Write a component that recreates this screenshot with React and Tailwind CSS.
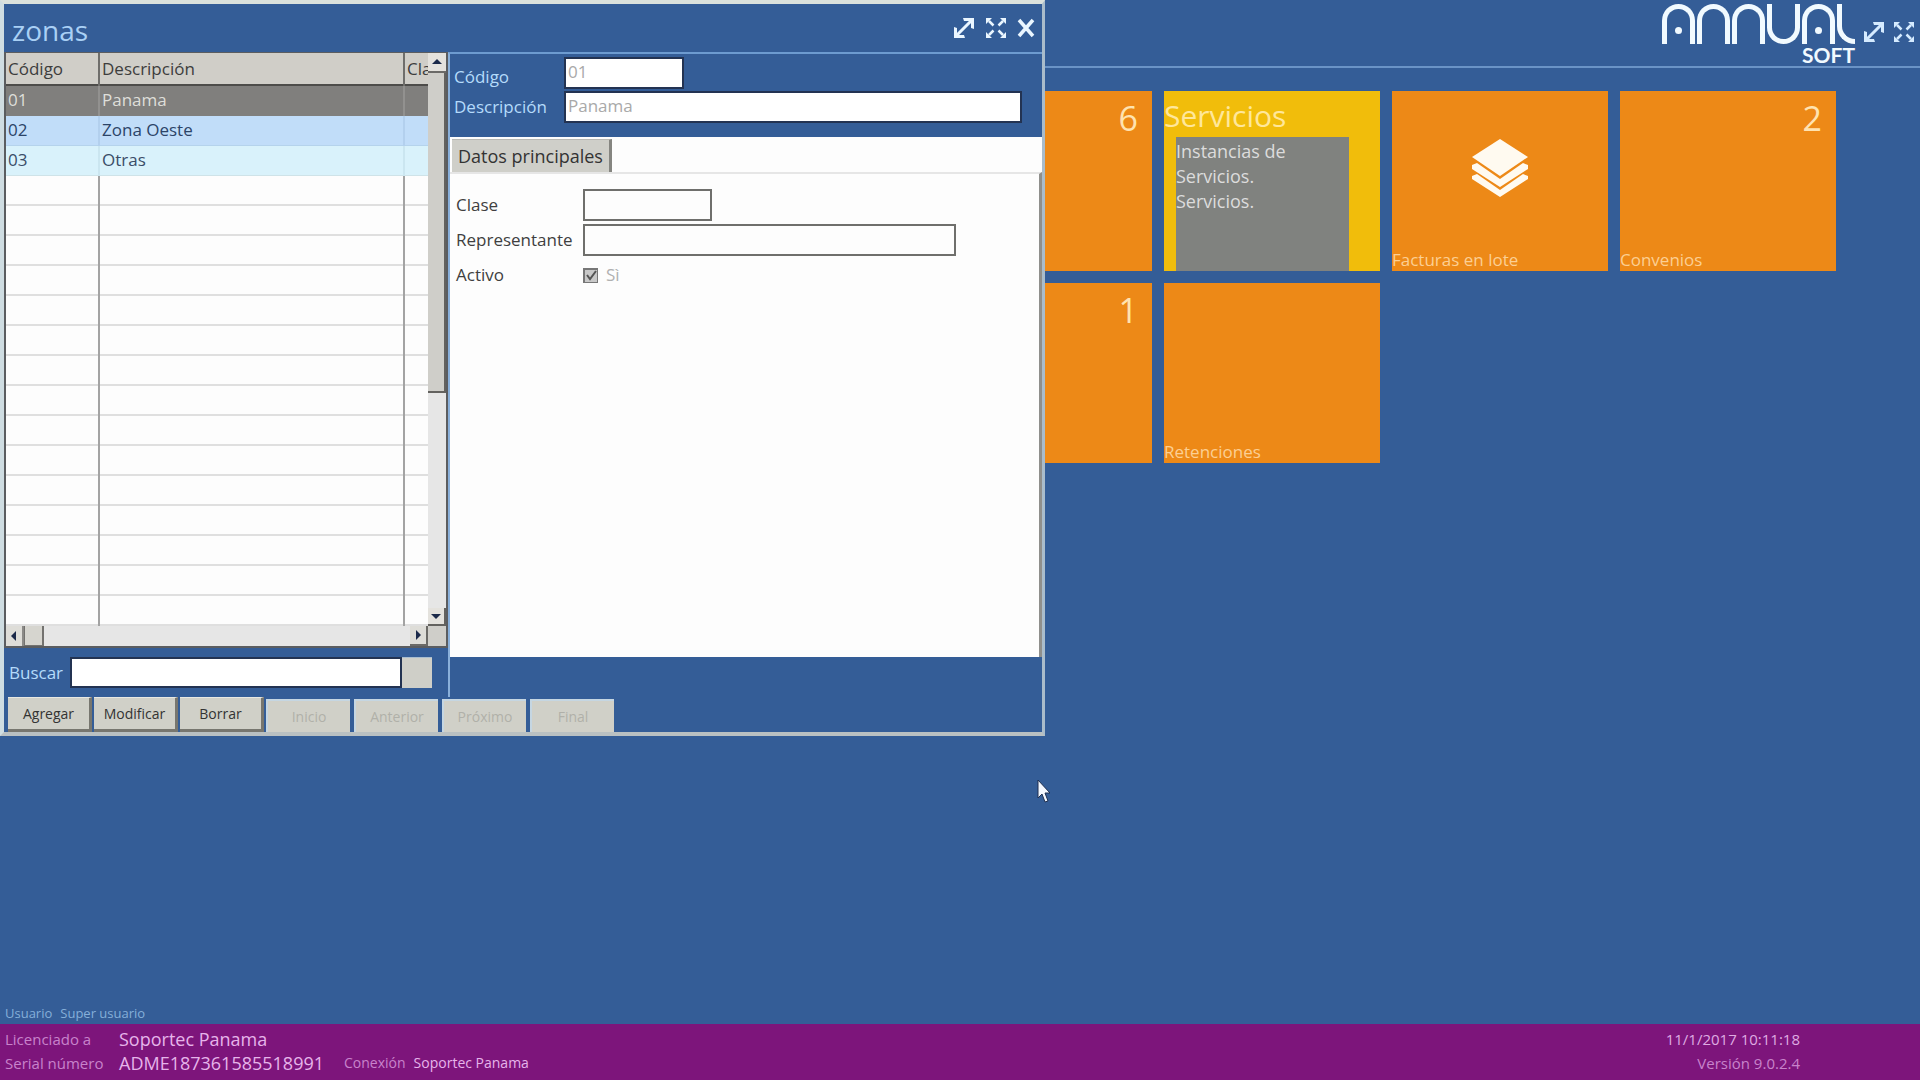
import { useState } from 'react';

const zones = [
  { code: '01', name: 'Panama' },
  { code: '02', name: 'Zona Oeste' },
  { code: '03', name: 'Otras' },
];

const rowStyles = [
  'bg-[#807f7d] text-[#deded9] border-[#807f7d]',
  'bg-[#c1ddf9] text-[#2c4468] border-[#b5d3ec]',
  'bg-[#d9f2fb] text-[#3a4d68] border-[#cfe3e8]',
];

const cellStyles = ['border-[#92918f]', 'border-[#b3d0ee]', 'border-[#cbe6f0]'];

const emptyRows = Array.from({ length: 15 }, (_, i) => i);

const actions = ['Agregar', 'Modificar', 'Borrar'];
const navigation = ['Inicio', 'Anterior', 'Próximo', 'Final'];

const ExpandIcon = () => (
  <svg viewBox="0 0 22 22" className="size-[22px]" fill="currentColor">
    <path d="M4 18 18 4" stroke="currentColor" strokeWidth="3" />
    <path d="M10 1h11v11l-3-1V6l-2-2h-5zM12 21H1V10l3 1v5l2 2h5z" />
  </svg>
);

const ShrinkIcon = () => (
  <svg viewBox="0 0 22 22" className="size-[22px]" fill="currentColor" stroke="currentColor">
    <path d="m4 4 4.500 4.500M18 4l-4.500 4.500M4 18l4.500-4.500M18 18l-4.500-4.500" strokeWidth="2.500" />
    <path d="M1 1h6L1 7zM21 1h-6l6 6zM1 21h6l-6-6zM21 21h-6l6-6z" stroke="none" />
  </svg>
);

const CloseIcon = () => (
  <svg viewBox="0 0 18 20" className="h-5 w-[18px]" fill="none" stroke="currentColor" strokeWidth="3.500">
    <path d="M2 2 16 18M16 2 2 18" />
  </svg>
);

const LayersIcon = () => (
  <svg viewBox="0 0 56 58" className="h-[58px] w-14" fill="#fffaf0">
    <path d="M28 0 56 18 28 37 0 18z" />
    <path d="M0 26l5-2 23 16 23-16 5 2v4L28 48 0 30z" />
    <path d="M0 37l5-2 23 16 23-16 5 2v3L28 58 0 40z" />
  </svg>
);

const Arrow = ({ d }) => (
  <svg viewBox="0 0 10 10" className="size-[10px]" fill="#1c2a4a">
    <path d={d} />
  </svg>
);

const Logo = () => (
  <div role="img" aria-label="Annual Soft" className="flex flex-col items-end text-[#f1faff]">
    <div className="flex h-10 gap-0.5">
      <div className="flex w-[33px] items-center justify-center rounded-t-full border-[5px] border-b-0 border-current pt-2">
        <span className="size-[7px] rounded-full bg-current" />
      </div>
      <div className="w-[33px] rounded-t-full border-[5px] border-b-0 border-current" />
      <div className="w-[33px] rounded-t-full border-[5px] border-b-0 border-current" />
      <div className="w-[33px] rounded-b-full border-[5px] border-t-0 border-current" />
      <div className="flex w-[33px] items-center justify-center rounded-t-full border-[5px] border-b-0 border-current pt-2">
        <span className="size-[7px] rounded-full bg-current" />
      </div>
      <div className="w-[18px] rounded-bl-[18px] border-b-[5px] border-l-[5px] border-current" />
    </div>
    <span className="font-['Lato',sans-serif] text-[21px] leading-[22px] font-bold">SOFT</span>
  </div>
);

const Tile = ({ label, count, className = 'bg-[#ed8917]', children }) => (
  <button type="button" className={`flex h-[180px] flex-col text-left ${className}`}>
    {count && <span className="self-end pt-1 pr-[14px] text-[34px] leading-[46px] text-[#ffe3b0]">{count}</span>}
    {children}
    {label && <span className="mt-auto text-[17px] leading-[22px] text-[#fccf93]">{label}</span>}
  </button>
);

const ZoneTable = ({ selected, onSelect }) => (
  <table className="w-full table-fixed border-collapse bg-[#fdfdfd] text-left text-[17px] leading-[22px]">
    <colgroup>
      <col className="w-[93px]" />
      <col className="w-[305px]" />
      <col />
    </colgroup>
    <thead>
      <tr className="h-8 border-b-2 border-[#4d4c4a] bg-[#d0cec8] text-[#3d3d3d]">
        <th className="border-r-2 border-[#6f6e6b] px-0.5 font-normal">Código</th>
        <th className="border-r-2 border-[#6f6e6b] px-0.5 font-normal">Descripción</th>
        <th className="overflow-hidden pl-0.5 font-normal">Clase</th>
      </tr>
    </thead>
    <tbody>
      {zones.map((zone, i) => (
        <tr
          key={zone.code}
          aria-selected={selected === i}
          onClick={() => onSelect(i)}
          className={`h-[30px] border-b ${rowStyles[i]}`}
        >
          <td className={`border-r-2 px-0.5 ${cellStyles[i]}`}>{zone.code}</td>
          <td className={`border-r-2 px-0.5 ${cellStyles[i]}`}>{zone.name}</td>
          <td />
        </tr>
      ))}
      {emptyRows.map(i => (
        <tr key={i} className="h-[30px] border-b-2 border-[#dfdfdf]">
          <td className="border-r-2 border-r-[#a3a3a3]" />
          <td className="border-r-2 border-r-[#a3a3a3]" />
          <td />
        </tr>
      ))}
    </tbody>
  </table>
);

const ZoneWindow = () => {
  const [selected, setSelected] = useState(0);
  const zone = zones[selected];

  return (
    <section className="absolute top-0 left-0 w-[1045px] border-4 border-r-[3px] border-t-[#dbe1dc] border-r-[#a9bccb] border-b-[#b9c0c2] border-l-[#cfdde2] bg-[#345d97]">
      <div className="flex h-12 items-center justify-between pr-[7px] pl-2 text-[#eaf6ff]">
        <h1 className="pt-1 text-[28px] leading-8 text-[#a9d0f5]">zonas</h1>
        <div className="flex items-center gap-[10px]">
          <button type="button" aria-label="Maximizar"><ExpandIcon /></button>
          <button type="button" aria-label="Restaurar"><ShrinkIcon /></button>
          <button type="button" aria-label="Cerrar"><CloseIcon /></button>
        </div>
      </div>

      <div className="flex">
        <div className="w-[444px]">
          <div className="flex border-t border-r-2 border-b-2 border-l-2 border-[#5b5d60] bg-[#e6e6e6]">
            <div className="w-[422px]">
              <ZoneTable selected={selected} onSelect={setSelected} />
              <div className="flex h-5 items-stretch">
                <button type="button" aria-label="Izquierda" className="flex w-[18px] items-center justify-center border-r-2 border-[#8b8a87] bg-[#deddd8]">
                  <Arrow d="M7 0v10L2 5z" />
                </button>
                <div className="w-5 border-r-2 border-b border-l border-[#73726f] bg-[#d6d5cf]" />
                <div className="flex-1" />
                <button type="button" aria-label="Derecha" className="flex w-[18px] items-center justify-center border-r-2 border-b-2 border-[#6b6a67] bg-[#deddd8]">
                  <Arrow d="M3 0v10l5-5z" />
                </button>
              </div>
            </div>
            <div className="flex flex-1 flex-col">
              <button type="button" aria-label="Arriba" className="flex h-5 items-center justify-center border-b-2 border-[#6b6a67] bg-[#e4e2dd]">
                <Arrow d="M0 7h10L5 2z" />
              </button>
              <div className="h-80 border-r-2 border-b-2 border-[#63625f] bg-[#cfcec9]" />
              <div className="flex-1" />
              <button type="button" aria-label="Abajo" className="flex h-[18px] items-center justify-center border-r-2 border-b-2 border-[#63625f] bg-[#e4e2dd]">
                <Arrow d="M0 3h10L5 8z" />
              </button>
              <div className="h-5 bg-[#cfcec9]" />
            </div>
          </div>

          <div className="flex h-[49px] items-center text-[17px]">
            <label htmlFor="search" className="w-[66px] pl-[5px] text-[#b5dbfb]">Buscar</label>
            <input id="search" className="h-[31px] w-[332px] border-2 border-[#233352] bg-white px-1 outline-none" />
            <button type="button" aria-label="Buscar zona" className="h-[31px] w-[30px] border-t border-[#a9bdd0] bg-[#cfcfc8]" />
          </div>
        </div>

        <div className="flex flex-1 flex-col border-t-2 border-l-2 border-t-[#6d9bd0] border-l-[#8ab0da]">
          <div className="flex flex-col gap-0.5 pt-[3px] pb-[14px] pl-1 text-[17px] leading-6 text-[#b5dbfb]">
            <div className="flex items-center">
              <label htmlFor="code" className="w-[110px] pt-2">Código</label>
              <input id="code" disabled value={zone.code} className="h-8 w-[120px] border-2 border-[#233352] bg-white px-0.5 pb-1 text-[#a9a9a9]" />
            </div>
            <div className="flex items-center">
              <label htmlFor="name" className="w-[110px]">Descripción</label>
              <input id="name" disabled value={zone.name} className="h-8 w-[458px] border-2 border-[#233352] bg-white px-0.5 pb-1 text-[#a9a9a9]" />
            </div>
          </div>

          <div className="bg-[#fdfdfd] pt-0.5 text-[17px] text-[#3f3f3f]">
            <div className="flex pl-0.5">
              <button type="button" className="h-[33px] border-t border-r-[3px] border-t-[#b9b9b4] border-r-[#858580] bg-[#cfcfc9] px-[6px] text-lg leading-6 text-[#333]">
                Datos principales
              </button>
            </div>
            <form className="flex h-[485px] flex-col gap-[3px] border-t-2 border-r-[3px] border-t-[#e6e6e6] border-r-[#8f8f8c] pt-[15px] pl-[6px]">
              <div className="flex items-center">
                <label htmlFor="kind" className="w-[127px]">Clase</label>
                <input id="kind" className="h-8 w-[129px] border-2 border-[#6f6f6c] px-1 outline-none" />
              </div>
              <div className="flex items-center">
                <label htmlFor="agent" className="w-[127px]">Representante</label>
                <input id="agent" className="h-8 w-[373px] border-2 border-[#6f6f6c] px-1 outline-none" />
              </div>
              <div className="flex h-8 items-center">
                <label htmlFor="active" className="w-[127px]">Activo</label>
                <label className="flex items-center gap-2 text-[#b0b0b0]">
                  <span className="grid size-[15px]">
                    <input id="active" type="checkbox" checked disabled className="col-start-1 row-start-1 appearance-none border-2 border-r border-b border-[#777] bg-[#c9c9c9]" />
                    <svg viewBox="0 0 15 15" className="col-start-1 row-start-1" fill="none" stroke="#555" strokeWidth="2">
                      <path d="m4 7 3 4 6-8" />
                    </svg>
                  </span>
                  Sì
                </label>
              </div>
            </form>
          </div>
        </div>
      </div>

      <div className="flex h-[35px] gap-0.5 pl-1">
        {actions.map(label => (
          <button key={label} type="button" className="h-[35px] w-[84px] border-t border-r-[3px] border-b-[3px] border-t-[#e8e8e2] border-r-[#77766f] border-b-[#77766f] bg-[#d0d0c8] text-sm font-medium text-[#333]">
            {label}
          </button>
        ))}
        <div className="flex gap-1 pt-0.5">
          {navigation.map(label => (
            <button key={label} type="button" disabled className="w-[84px] border-t-2 border-l-2 border-[#c5d6e2] bg-[#d0d0c8] text-sm text-[#b0b0a9]">
              {label}
            </button>
          ))}
        </div>
      </div>
    </section>
  );
};

const App = () => {
  return (
    <div className="relative flex min-h-screen flex-col bg-[#345d97] font-['Open_Sans','Noto_Sans',sans-serif]">
      <header className="flex h-[68px] justify-end gap-2 border-b-2 border-[#6a93c6] pt-1 pr-[5px] text-[#d5ebff]">
        <Logo />
        <div className="flex items-start gap-2 pt-[17px]">
          <button type="button" aria-label="Expandir"><ExpandIcon /></button>
          <button type="button" aria-label="Contraer"><ShrinkIcon /></button>
        </div>
      </header>

      <main className="flex flex-1 flex-col">
        <div className="grid grid-cols-[repeat(4,216px)] gap-3 pt-[23px] pl-[936px]">
          <Tile count="6" />
          <Tile className="bg-[#f1bd0b]">
            <span className="pt-1 text-[30px] leading-[42px] text-[#ffe79a]">Servicios</span>
            <span className="ml-3 w-[173px] flex-1 bg-[#80827f] pt-0.5 pr-10 text-lg leading-[25px] text-[#dcdcdc]">
              Instancias de Servicios. Servicios.
            </span>
          </Tile>
          <Tile label="Facturas en lote">
            <span className="self-center pt-12"><LayersIcon /></span>
          </Tile>
          <Tile label="Convenios" count="2" />
          <Tile count="1" />
          <Tile label="Retenciones" />
        </div>
        <div className="mt-auto flex gap-2 pb-0.5 pl-[5px] text-[13px] leading-[18px] text-[#85afd9]">
          <span>Usuario</span>
          <span>Super usuario</span>
        </div>
      </main>

      <footer className="flex h-14 justify-between bg-[#7d157b] pt-[3px] pr-[120px] pl-[5px] text-[#c883cb]">
        <div className="grid grid-cols-[114px_auto] content-start text-[15px] leading-6">
          <span>Licenciado a</span>
          <span className="text-lg leading-6 text-[#e6b4ea]">Soportec Panama</span>
          <span>Serial número</span>
          <div className="flex items-center">
            <span className="text-lg leading-6 text-[#e6b4ea]">ADME187361585518991</span>
            <span className="pl-5 text-sm leading-6">Conexión</span>
            <span className="pl-2 text-sm leading-6 font-medium text-[#e6b4ea]">Soportec Panama</span>
          </div>
        </div>
        <div className="flex flex-col items-end text-[15px] leading-6">
          <span className="text-[#dfabe2]">11/1/2017 10:11:18</span>
          <span>Versión 9.0.2.4</span>
        </div>
      </footer>

      <ZoneWindow />

      <svg viewBox="0 0 13 24" className="absolute top-[779px] left-[1037px] h-6 w-[13px]" fill="#f4f8ff" stroke="#1f2f50">
        <path d="M1 1v18l4-4 3 8 3-1-3-8h5z" />
      </svg>
    </div>
  );
};

export default App;
